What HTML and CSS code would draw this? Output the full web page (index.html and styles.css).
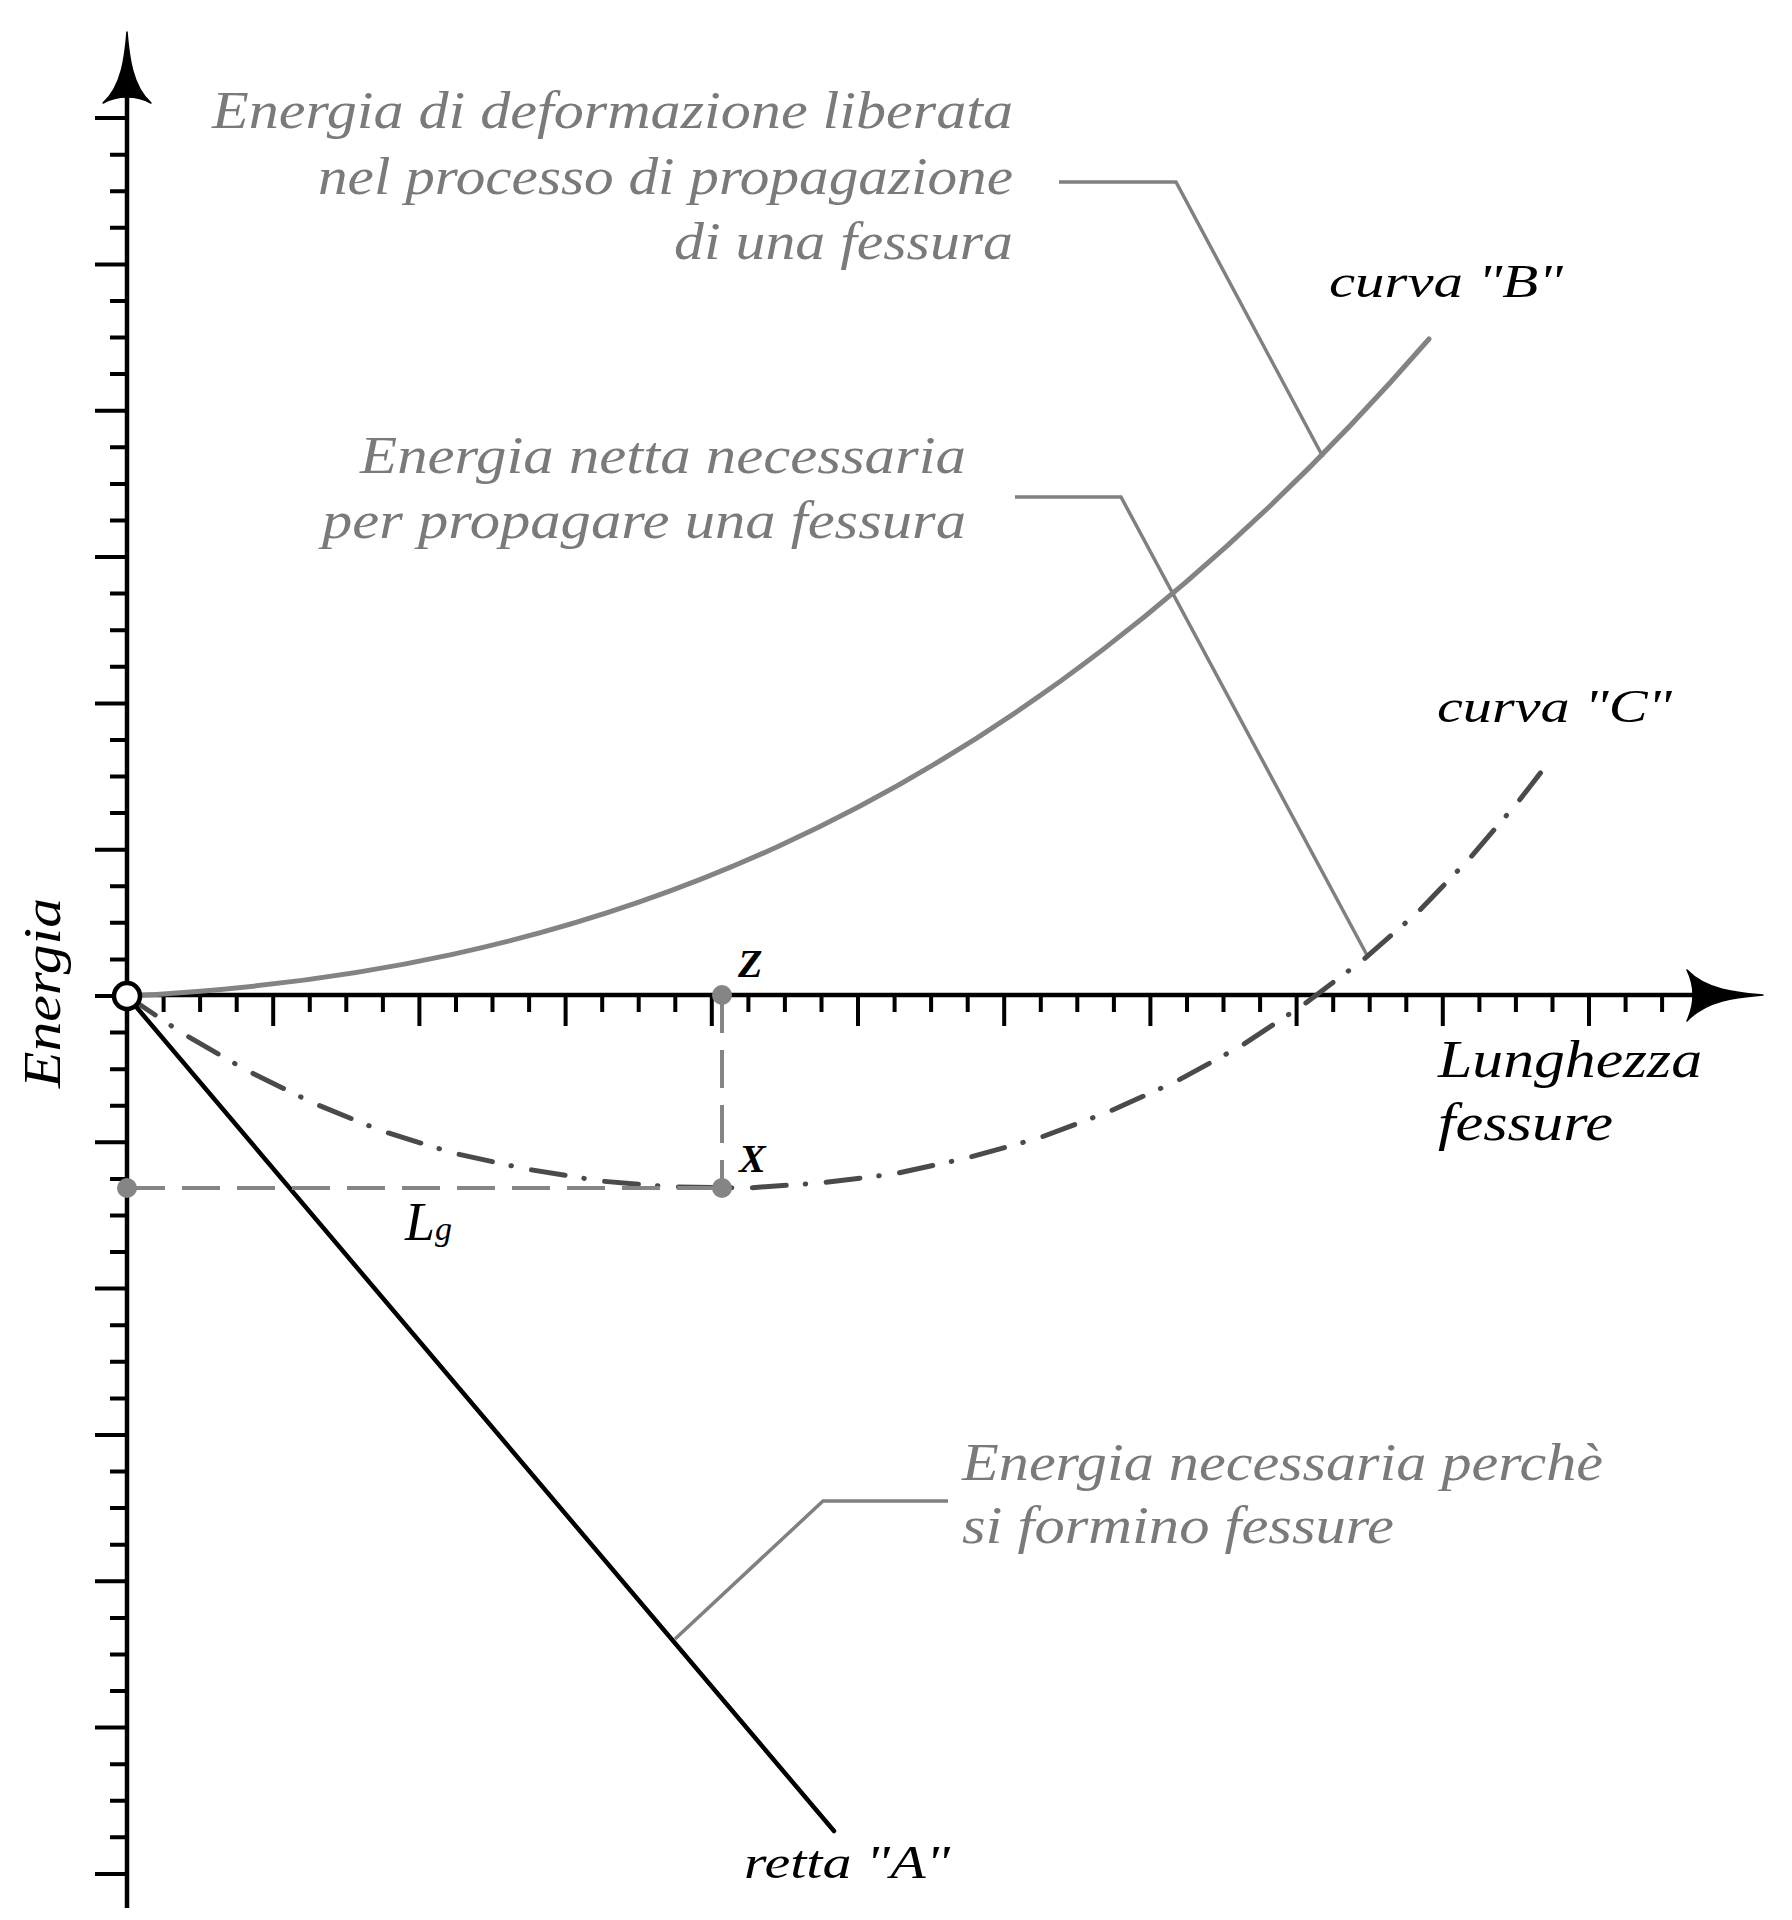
FILE: index.html
```html
<!DOCTYPE html>
<html lang="it">
<head>
<meta charset="utf-8">
<title>Energia - Lunghezza fessure</title>
<link rel="stylesheet" href="styles.css">
</head>
<body>
<div class="canvas">
<svg class="chart" width="1792" height="1920" viewBox="0 0 1792 1920" xmlns="http://www.w3.org/2000/svg">
  <!-- axes -->
  <path class="axis" d="M127 60 V1908"/>
  <path class="axis" d="M127 995 H1730"/>
  <path class="arrow" d="M127 32 C129 56 132 86 151 103 Q140 97 127 97 Q114 97 103 103 C122 86 125 56 127 32 Z"/>
  <path class="arrow" d="M1763 995 C1740 997 1707 999 1687 1021 Q1693 1008 1693 995 Q1693 982 1687 970 C1707 991 1740 993 1763 995 Z"/>

  <!-- y ticks: short -->
  <path class="tick" d="M110 959.4H127 M110 922.8H127 M110 886.3H127 M110 813.1H127 M110 776.5H127 M110 739.9H127 M110 666.8H127 M110 630.2H127 M110 593.6H127 M110 520.5H127 M110 483.9H127 M110 447.3H127 M110 374.1H127 M110 337.6H127 M110 301H127 M110 227.8H127 M110 191.2H127 M110 154.7H127 M110 1032.6H127 M110 1069.2H127 M110 1105.7H127 M110 1178.9H127 M110 1215.5H127 M110 1252.1H127 M110 1325.2H127 M110 1361.8H127 M110 1398.4H127 M110 1471.5H127 M110 1508.1H127 M110 1544.7H127 M110 1617.9H127 M110 1654.4H127 M110 1691H127 M110 1764.2H127 M110 1800.8H127 M110 1837.3H127"/>
  <!-- y ticks: long -->
  <path class="tick" d="M95 118.1H127 M95 264.4H127 M95 410.7H127 M95 557H127 M95 703.4H127 M95 849.7H127 M95 996H127 M95 1142.3H127 M95 1288.6H127 M95 1435H127 M95 1581.3H127 M95 1727.6H127 M95 1873.9H127"/>
  <!-- x ticks: short -->
  <path class="tick" d="M163.6 995V1012 M200.1 995V1012 M236.7 995V1012 M309.8 995V1012 M346.3 995V1012 M382.9 995V1012 M456 995V1012 M492.5 995V1012 M529.1 995V1012 M602.2 995V1012 M638.7 995V1012 M675.3 995V1012 M748.4 995V1012 M784.9 995V1012 M821.5 995V1012 M894.6 995V1012 M931.1 995V1012 M967.7 995V1012 M1040.8 995V1012 M1077.3 995V1012 M1113.9 995V1012 M1187 995V1012 M1223.5 995V1012 M1260.1 995V1012 M1333.2 995V1012 M1369.7 995V1012 M1406.3 995V1012 M1479.4 995V1012 M1515.9 995V1012 M1552.5 995V1012 M1625.6 995V1012 M1662.1 995V1012"/>
  <!-- x ticks: long -->
  <path class="tick" d="M273.2 995V1026 M419.4 995V1026 M565.6 995V1026 M711.8 995V1026 M858 995V1026 M1004.2 995V1026 M1150.4 995V1026 M1296.6 995V1026 M1442.8 995V1026 M1589 995V1026"/>

  <!-- leader lines -->
  <path class="leader" d="M1059 182 H1176 L1323 457"/>
  <path class="leader" d="M1015 497 H1121 L1368 957"/>
  <path class="leader" d="M948 1501 H823 L675 1639"/>

  <!-- curve B -->
  <path class="curve-b" d="M127 996 C561 974.3 995 838 1429 339"/>

  <!-- curve C -->
  <path class="curve-c" d="M127 996 L182 1033 L246 1070 L313 1103 L382 1131 L453 1153 L526 1169 L600 1181 L673 1187 L747 1188 L820 1183 L894 1174 L967 1158 L1039 1138 L1108 1112 L1177 1081 L1241 1046 L1303 1005 L1363 960 L1418 912 L1470 858 L1518 802 L1552 758"/>

  <!-- line A -->
  <path class="line-a" d="M127 996 L834 1831"/>

  <!-- Lg dashed guides -->
  <path class="guide" d="M127 1188 H722"/>
  <path class="guide" d="M722 995 V1188"/>
  <circle class="dot" cx="127" cy="1188" r="10"/>
  <circle class="dot" cx="722" cy="995" r="10"/>
  <circle class="dot" cx="722" cy="1188" r="10"/>

  <!-- origin -->
  <circle class="origin" cx="127" cy="996" r="13"/>

  <!-- grey labels -->
  <text class="lbl-grey end" x="1013" y="128" textLength="801" lengthAdjust="spacingAndGlyphs">Energia di deformazione liberata</text>
  <text class="lbl-grey end" x="1013" y="194" textLength="695" lengthAdjust="spacingAndGlyphs">nel processo di propagazione</text>
  <text class="lbl-grey end" x="1013" y="259" textLength="339" lengthAdjust="spacingAndGlyphs">di una fessura</text>

  <text class="lbl-grey end" x="966" y="473" textLength="606" lengthAdjust="spacingAndGlyphs">Energia netta necessaria</text>
  <text class="lbl-grey end" x="966" y="538" textLength="644" lengthAdjust="spacingAndGlyphs">per propagare una fessura</text>

  <text class="lbl-grey" x="962" y="1480" textLength="641" lengthAdjust="spacingAndGlyphs">Energia necessaria perchè</text>
  <text class="lbl-grey" x="962" y="1543" textLength="432" lengthAdjust="spacingAndGlyphs">si formino fessure</text>

  <!-- black labels -->
  <text class="lbl-black" x="1329" y="297" textLength="234" lengthAdjust="spacingAndGlyphs">curva "B"</text>
  <text class="lbl-black" x="1437" y="722" textLength="235" lengthAdjust="spacingAndGlyphs">curva "C"</text>
  <text class="lbl-black" x="744" y="1878" textLength="206" lengthAdjust="spacingAndGlyphs">retta "A"</text>
  <text class="lbl-axis" x="1438" y="1077" textLength="264" lengthAdjust="spacingAndGlyphs">Lunghezza</text>
  <text class="lbl-axis" x="1438" y="1140" textLength="175" lengthAdjust="spacingAndGlyphs">fessure</text>
  <text class="lbl-axis" x="60" y="1088" transform="rotate(-90 60 1088)" textLength="190" lengthAdjust="spacingAndGlyphs">Energia</text>

  <text class="lbl-point" x="738" y="977">Z</text>
  <text class="lbl-point" x="739" y="1172">X</text>
  <text class="lbl-lg" x="405" y="1240">L<tspan class="sub">g</tspan></text>
</svg>
</div>
</body>
</html>
```

FILE: styles.css
```css
html, body {
  margin: 0;
  padding: 0;
  background: #ffffff;
}

.canvas {
  width: 1792px;
  height: 1920px;
  overflow: hidden;
}

.chart {
  display: block;
}

.axis {
  fill: none;
  stroke: #000000;
  stroke-width: 4.5;
}

.arrow {
  fill: #000000;
  stroke: #000000;
  stroke-width: 1.5;
  stroke-linejoin: round;
}

.tick {
  fill: none;
  stroke: #000000;
  stroke-width: 4;
}

.leader {
  fill: none;
  stroke: #808080;
  stroke-width: 3.5;
  stroke-linejoin: miter;
}

.curve-b {
  fill: none;
  stroke: #838383;
  stroke-width: 5;
  stroke-linecap: round;
}

.curve-c {
  fill: none;
  stroke: #4a4a4a;
  stroke-width: 5;
  stroke-linecap: round;
  stroke-linejoin: round;
  stroke-dasharray: 34 19 0.5 20.5;
}

.line-a {
  fill: none;
  stroke: #000000;
  stroke-width: 4.5;
  stroke-linecap: round;
}

.guide {
  fill: none;
  stroke: #858585;
  stroke-width: 4;
  stroke-dasharray: 38 17;
}

.dot {
  fill: #858585;
}

.origin {
  fill: #ffffff;
  stroke: #000000;
  stroke-width: 4.5;
}

.lbl-grey,
.lbl-black,
.lbl-axis,
.lbl-point,
.lbl-lg {
  font-family: "Liberation Serif", "DejaVu Serif", serif;
  font-style: italic;
}

.lbl-grey {
  fill: #7a7a7a;
  font-size: 53px;
}

.end {
  text-anchor: end;
}

.lbl-black {
  fill: #000000;
  font-size: 46px;
}

.lbl-axis {
  fill: #000000;
  font-size: 52px;
}

.lbl-point {
  fill: #000000;
  font-size: 40px;
  font-weight: 700;
}

.lbl-lg {
  fill: #000000;
  font-size: 54px;
}

.lbl-lg .sub {
  font-size: 34px;
}
```
